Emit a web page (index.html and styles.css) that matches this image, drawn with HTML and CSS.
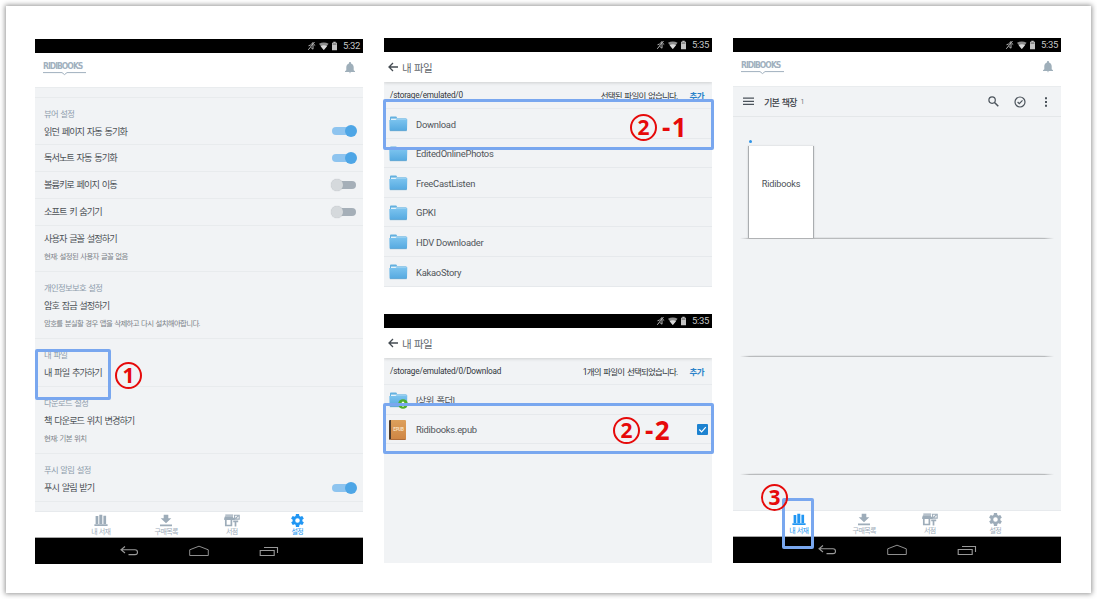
FILE: index.html
```html
<!DOCTYPE html>
<html lang="ko">
<head>
<meta charset="utf-8">
<title>RIDIBOOKS</title>
<link rel="stylesheet" href="styles.css">
</head>
<body>
<svg class="defs" width="0" height="0">
  <linearGradient id="fold" x1="0" y1="0" x2="0" y2="1"><stop offset="0" stop-color="#7cc4ef"/><stop offset="1" stop-color="#55a9e0"/></linearGradient>
  <symbol id="status" viewBox="0 0 32 10">
    <path d="M1.300 8.800 7.500 1M1.500 4.800 3.500 4 6 1.600v6.600L3.600 6.300M7 3.500l1.200 1" stroke="#b4b4b4" fill="none" stroke-width="1"/>
    <path d="M12 2.800Q16.800 .2 21.600 2.800L16.800 9z" fill="#8d8d8d"/><path d="M13.600 5.200Q16.800 3.400 20 5.200L16.800 9z" fill="#d8d8d8"/>
    <path d="M25 1.800h1.300V.8h2.400v1H30v7.500h-5z" fill="#c4c4c4"/><path d="M25.600 2.400h3.800v1.400h-3.800z" fill="#777"/>
  </symbol>
  <symbol id="bell" viewBox="0 0 10 12"><path d="M5 0C4.400 0 4 .4 4 1v.5C2.300 2 1.300 3.500 1.300 5.200v3L0 9.300v.6h10v-.6L8.700 8.200v-3C8.700 3.500 7.700 2 6 1.500V1c0-.6-.4-1-1-1zM3.900 10.400a1.150 1.150 0 0 0 2.200 0z" fill="#9fafba"/></symbol>
  <symbol id="shelf" viewBox="0 0 14 12"><path d="M1.600 1.500h2.700v8H1.600zM5.300 .2h3v9.300H5.300zM9.400 1.200h2.700v8.300H9.400zM.4 9.800h13.200v1.800H.4z" fill="currentColor"/></symbol>
  <symbol id="down" viewBox="0 0 14 12"><path d="M4.700 .2h4.600v3.600h3L7 8.800 1.700 3.800h3zM1 9.900h12v1.900H1z" fill="currentColor"/></symbol>
  <symbol id="store" viewBox="0 0 16 12"><path d="M1.300 0h7.900v1.300H1.300zM1 1.800h8v1.400h1.700v2.300H.2V3.800z" fill="currentColor"/><path d="M1.800 5v6h5.600V5M11.500 6.500V12M9.200 6.800h5" fill="none" stroke="currentColor" stroke-width="1.700"/><path d="M10.600 .7h4.600v3.900h-4.600zM11.500 4l2.800-2.600" fill="none" stroke="currentColor" stroke-width="1.100"/></symbol>
  <symbol id="gear" viewBox="2 2 20 20"><path fill="currentColor" d="M19.400 13c.04-.3.100-.600.100-1s-.06-.700-.100-1l2.100-1.600c.200-.150.250-.420.120-.640l-2-3.460c-.120-.220-.380-.300-.600-.220l-2.500 1c-.520-.400-1.080-.730-1.690-.980l-.380-2.650A.490.490 0 0 0 14 2h-4c-.250 0-.460.180-.490.420l-.380 2.650c-.610.250-1.170.590-1.690.980l-2.490-1c-.230-.090-.490 0-.610.220l-2 3.460c-.130.220-.070.490.120.640L4.600 11c-.060.300-.100.660-.100 1s.040.700.100 1l-2.100 1.600c-.190.150-.250.420-.120.640l2 3.460c.120.220.380.300.600.220l2.500-1c.520.400 1.080.730 1.690.980l.380 2.650c.030.240.240.420.490.420h4c.250 0 .460-.180.490-.420l.380-2.650c.610-.250 1.170-.590 1.690-.980l2.490 1c.230.090.490 0 .610-.220l2-3.460c.120-.220.070-.490-.120-.640zM12 15.500a3.500 3.500 0 1 1 0-7 3.500 3.500 0 0 1 0 7z"/></symbol>
  <symbol id="back" viewBox="0 0 20 12"><path d="M6 1.500 2 4.800 6 8M2 4.800h14q2.500 0 2.500 2.400T16 9.600H9.500" fill="none" stroke="#9a9a9a" stroke-width="1.100"/></symbol>
  <symbol id="home" viewBox="0 0 20 12"><path d="M.7 10.500V4.800L10 1.200l9.300 3.600v5.700z" fill="none" stroke="#8f8f8f" stroke-width="1"/></symbol>
  <symbol id="recent" viewBox="0 0 20 12"><path d="M1.200 5.500h14v5h-14zM5 2.500h13.500v5.500" fill="none" stroke="#999" stroke-width="1.100"/></symbol>
  <symbol id="arrow" viewBox="0 0 10 10"><path d="M5 1 1 5l4 4M1 5h9" fill="none" stroke="#444b52" stroke-width="1.300"/></symbol>
  <symbol id="folder" viewBox="0 0 19 16"><path d="M1 1.400Q1 .6 1.900 .6h5q.8 0 1 .8l.2.700h8.500q.9 0 .9.900V5H1z" fill="#64b1e0"/><path d="M2 2.600h15v3H2z" fill="#e6f3fa"/><path d="M.3 4h6.200l1-.8h10.800l-.3 10.800q0 .8-.8.800H1.400q-.8 0-.8-.8z" fill="url(#fold)"/><path d="M.9 14.700h16.800" stroke="#4b98c8" stroke-width=".6"/></symbol>
  <symbol id="plus" viewBox="0 0 10 10"><circle cx="5" cy="5" r="4.800" fill="#4eae2d"/><path d="M5 2.200 8 5.500H6v2H4v-2H2z" fill="#fff"/></symbol>
</svg>

<main class="card">
  <section class="phone phone-settings">
    <div class="status"><svg width="32" height="10"><use href="#status"/></svg><span>5:32</span></div>
    <header class="brand"><div class="logo">RIDIBOOKS<svg width="43" height="4" viewBox="0 0 43 4"><path d="M0 .6h19l2.500 2L24 .6h19" fill="none" stroke="#a1b0be"/></svg></div><svg class="bell" width="10" height="12"><use href="#bell"/></svg></header>
    <div class="settings">
      <div class="stub"></div>
      <div class="group first"><h2>뷰어 설정</h2><p>읽던 페이지 자동 동기화</p><i class="switch on"></i></div>
      <div class="group"><p>독서노트 자동 동기화</p><i class="switch on"></i></div>
      <div class="group"><p>볼륨키로 페이지 이동</p><i class="switch"></i></div>
      <div class="group"><p>소프트 키 숨기기</p><i class="switch"></i></div>
      <div class="group noted"><p>사용자 글꼴 설정하기</p><small>현재: 설정된 사용자 글꼴 없음</small></div>
      <div class="group first noted"><h2>개인정보보호 설정</h2><p>암호 잠금 설정하기</p><small>암호를 분실할 경우 앱을 삭제하고 다시 설치해야합니다.</small></div>
      <div class="group first"><h2>내 파일</h2><p>내 파일 추가하기</p></div>
      <div class="group first noted"><h2>다운로드 설정</h2><p>책 다운로드 위치 변경하기</p><small>현재: 기본 위치</small></div>
      <div class="group first"><h2>푸시 알림 설정</h2><p>푸시 알림 받기</p><i class="switch on"></i></div>
    </div>
    <nav class="tabs">
      <div><svg width="14" height="12"><use href="#shelf"/></svg><span>내 서재</span></div>
      <div><svg width="14" height="12"><use href="#down"/></svg><span>구매목록</span></div>
      <div><svg width="16" height="12"><use href="#store"/></svg><span>서점</span></div>
      <div class="active"><svg width="13" height="13"><use href="#gear"/></svg><span>설정</span></div>
    </nav>
    <div class="keys"><svg width="20" height="12"><use href="#back"/></svg><svg width="20" height="12"><use href="#home"/></svg><svg width="20" height="12"><use href="#recent"/></svg></div>
    <div class="frame frame-add"></div>
    <div class="step step-one"><b>1</b></div>
  </section>

  <div class="column">
    <section class="phone browser">
      <div class="status"><svg width="32" height="10"><use href="#status"/></svg><span>5:35</span></div>
      <header class="title"><svg width="10" height="10"><use href="#arrow"/></svg><span>내 파일</span></header>
      <div class="path"><span>/storage/emulated/0</span><em>선택된 파일이 없습니다.</em><a>추가</a></div>
      <div class="file"><svg width="19" height="16"><use href="#folder"/></svg><span>Download</span></div>
      <div class="file"><svg width="19" height="16"><use href="#folder"/></svg><span>EditedOnlinePhotos</span></div>
      <div class="file"><svg width="19" height="16"><use href="#folder"/></svg><span>FreeCastListen</span></div>
      <div class="file"><svg width="19" height="16"><use href="#folder"/></svg><span>GPKI</span></div>
      <div class="file"><svg width="19" height="16"><use href="#folder"/></svg><span>HDV Downloader</span></div>
      <div class="file"><svg width="19" height="16"><use href="#folder"/></svg><span>KakaoStory</span></div>
      <div class="frame frame-folder"></div>
      <div class="step step-two-a"><b>2</b><span>-1</span></div>
    </section>
    <section class="phone browser">
      <div class="status"><svg width="32" height="10"><use href="#status"/></svg><span>5:35</span></div>
      <header class="title"><svg width="10" height="10"><use href="#arrow"/></svg><span>내 파일</span></header>
      <div class="path"><span>/storage/emulated/0/Download</span><em>1개의 파일이 선택되었습니다.</em><a>추가</a></div>
      <div class="file"><div class="up"><svg width="19" height="16"><use href="#folder"/></svg><svg class="badge" width="10" height="10"><use href="#plus"/></svg></div><span class="ko">[상위 폴더]</span></div>
      <div class="file"><div class="epub">EPUB</div><span>Ridibooks.epub</span><svg class="check" width="11" height="11" viewBox="0 0 11 11"><rect width="11" height="11" rx="1" fill="#1c82d0"/><path d="M2.300 5.500 4.600 7.800 8.800 3.200" fill="none" stroke="#fff" stroke-width="1.200"/></svg></div>
      <div class="frame frame-epub"></div>
      <div class="step step-two-b"><b>2</b><span>-2</span></div>
    </section>
  </div>

  <section class="phone">
    <div class="status"><svg width="32" height="10"><use href="#status"/></svg><span>5:35</span></div>
    <header class="brand"><div class="logo">RIDIBOOKS<svg width="43" height="4" viewBox="0 0 43 4"><path d="M0 .6h19l2.500 2L24 .6h19" fill="none" stroke="#a1b0be"/></svg></div><svg class="bell" width="10" height="12"><use href="#bell"/></svg></header>
    <div class="toolbar">
      <svg width="11" height="9" viewBox="0 0 11 9"><path d="M0 1.200h11M0 4.300h11M0 7.400h11" stroke="#4b535b" stroke-width="1.300"/></svg>
      <strong>기본 책장</strong><span>1</span>
      <svg width="11" height="11" viewBox="0 0 11 11"><circle cx="4.100" cy="4.100" r="3.200" fill="none" stroke="#4b535b" stroke-width="1.200"/><path d="m6.500 6.500 3.800 3.800" stroke="#4b535b" stroke-width="1.500"/></svg>
      <svg width="12" height="12" viewBox="0 0 12 12"><circle cx="6" cy="6" r="5" fill="none" stroke="#4b535b" stroke-width="1.200"/><path d="m3.600 6 1.700 1.700 3.200-3.300" fill="none" stroke="#4b535b" stroke-width="1.200"/></svg>
      <svg width="4" height="12" viewBox="0 0 4 12"><path d="M1 1.200h2v2H1zM1 5h2v2H1zM1 8.800h2v2H1z" fill="#4b535b"/></svg>
    </div>
    <div class="shelves">
      <div class="shelf"><div class="book">Ridibooks<i></i></div></div>
      <div class="shelf"></div>
      <div class="shelf"></div>
    </div>
    <nav class="tabs">
      <div class="active"><svg width="14" height="12"><use href="#shelf"/></svg><span>내 서재</span></div>
      <div><svg width="14" height="12"><use href="#down"/></svg><span>구매목록</span></div>
      <div><svg width="16" height="12"><use href="#store"/></svg><span>서점</span></div>
      <div><svg width="13" height="13"><use href="#gear"/></svg><span>설정</span></div>
    </nav>
    <div class="keys"><svg width="20" height="12"><use href="#back"/></svg><svg width="20" height="12"><use href="#home"/></svg><svg width="20" height="12"><use href="#recent"/></svg></div>
    <div class="frame frame-library"></div>
    <div class="step step-three"><b>3</b></div>
  </section>
</main>
</body>
</html>
```

FILE: styles.css
```css
* { box-sizing: border-box; }
body {
  margin: 0;
  height: 599px;
  padding: 6px;
  overflow: hidden;
  background: #fff;
  font-family: Roboto, "Noto Sans CJK KR", sans-serif;
  color: #4d5257;
}
svg { display: block; flex: none; }
.defs { position: absolute; }
.card {
  display: flex;
  align-items: flex-start;
  gap: 21px;
  width: 1085px;
  height: 587px;
  padding: 32px 29px;
  background: #fff;
  box-shadow: 0 0 5px 1px rgba(0, 0, 0, .42);
}
.column { display: flex; flex-direction: column; gap: 27px; }
.phone {
  position: relative;
  display: flex;
  flex-direction: column;
  width: 328px;
  height: 525px;
  background: #f1f3f5;
}
.phone-settings { margin-top: 1px; }
.browser { height: 249px; }

.status {
  display: flex;
  align-items: center;
  justify-content: flex-end;
  gap: 4px;
  height: 14px;
  padding-right: 3px;
  background: #000;
  color: #c6c6c6;
  font-size: 9.500px;
  line-height: 14px;
}
.status span { letter-spacing: -.3px; }

.brand {
  display: flex;
  justify-content: space-between;
  align-items: flex-start;
  height: 35px;
  padding: 8px 8px 0;
  background: #fff;
  border-bottom: 1px solid #e9ecee;
}
.logo {
  width: 43px;
  font: 700 9px/11px "Liberation Sans Narrow", "DejaVu Sans Condensed", sans-serif;
  font-size: 8.500px;
  letter-spacing: -.98px;
  color: #a1b0be;
}
.bell { margin-top: 1px; }

.settings { flex: 1; }
.stub { height: 9.500px; border-bottom: 1px solid #e8ebed; }
.group {
  position: relative;
  display: flex;
  flex-direction: column;
  gap: 4px;
  height: 26.950px;
  padding: 6px 9px 0;
  border-bottom: 1px solid #e8ebed;
}
.group.first { height: 47.500px; padding-top: 9px; }
.group.noted { height: 46.400px; }
.group.first.noted { height: 67.200px; }
.group h2, .group p, .group small {
  margin: 0;
  font-weight: 400;
  line-height: 14px;
  white-space: nowrap;
}
.group h2 { font-size: 8.300px; letter-spacing: -.65px; word-spacing: 1px; color: #8c9bab; }
.group p { font-size: 9.200px; letter-spacing: -1px; word-spacing: 1.500px; color: #4d5257; }
.group small { font-size: 7.400px; letter-spacing: -.65px; word-spacing: 1px; color: #7c8288; }
.switch {
  position: absolute;
  right: 7px;
  bottom: 9px;
  width: 24px;
  height: 8px;
  border-radius: 4px;
  background: #a5afb8;
}
.switch::after {
  content: "";
  position: absolute;
  top: -2px;
  left: -1px;
  width: 12px;
  height: 12px;
  border-radius: 50%;
  background: #d5d9dc;
  box-shadow: 0 0 1px #a9afb4;
}
.switch.on { background: #8ec4ef; }
.switch.on::after { left: 13px; background: #4ea6e6; box-shadow: none; }

.tabs {
  display: grid;
  grid-template-columns: repeat(4, 1fr);
  height: 27px;
  padding: 0 33px;
  background: #fff;
  border-top: 1px solid #e7eaed;
  border-bottom: 1px solid #a6a6a6;
  color: #9dacb9;
}
.tabs div { display: flex; flex-direction: column; align-items: center; padding-top: 1px; }
.tabs svg { margin-top: 1px; height: 13px; }
.tabs span { font-size: 7px; line-height: 10px; letter-spacing: -.6px; word-spacing: .5px; }
.tabs .active { color: #2196f3; }
.keys {
  display: grid;
  grid-template-columns: repeat(3, 70px);
  justify-content: center;
  justify-items: center;
  align-items: center;
  height: 26px;
  background: #000;
}

.title {
  display: flex;
  align-items: center;
  gap: 4px;
  height: 30px;
  padding-left: 4px;
  background: #fff;
  box-shadow: 0 1px 3px rgba(0, 0, 0, .15);
  clip-path: inset(0 0 -4px 0);
  font-size: 10.500px;
  letter-spacing: -.6px;
  word-spacing: 1px;
  color: #62676d;
}
.path {
  display: flex;
  align-items: center;
  height: 27px;
  padding: 0 8px 0 6px;
  border-bottom: 1px solid #e7eaed;
  font-size: 8.200px;
  letter-spacing: -.18px;
  color: #30363b;
}
.path em { margin-left: auto; font-style: normal; font-size: 8.500px; letter-spacing: -.8px; word-spacing: 1.300px; }
.path a { margin-left: 12px; font-size: 8.500px; font-weight: 700; letter-spacing: -.6px; color: #2b82c9; }
.file {
  display: flex;
  align-items: center;
  gap: 8px;
  height: 29.600px;
  padding: 1.500px 4px 0 5px;
  border-bottom: 1px solid #e6e9ec;
  font-size: 9.400px;
  letter-spacing: -.25px;
  color: #50555a;
}
.file .ko { font-size: 9.300px; letter-spacing: -.6px; word-spacing: 1px; }
.up { position: relative; }
.badge { position: absolute; left: 9px; top: 7px; }
.epub {
  width: 17px;
  height: 20px;
  margin-right: 2px;
  border-left: 2.500px solid #4a3a2e;
  border-bottom: 1px solid #b06c38;
  border-radius: 1px;
  background: linear-gradient(#dda05c, #cf8644);
  color: #f7dfbf;
  font-size: 4.500px;
  font-weight: 700;
  line-height: 20px;
  text-align: center;
}
.check { margin-left: auto; }

.toolbar {
  display: flex;
  align-items: center;
  height: 30px;
  padding: 0 13px 0 10px;
  border-bottom: 1px solid #e4e7e9;
}
.toolbar strong { margin-left: 10px; font-size: 9.200px; font-weight: 500; letter-spacing: -.9px; word-spacing: 1px; color: #3c4248; }
.toolbar span { margin: 0 auto 0 4px; font-size: 7px; color: #737980; }
.toolbar svg + svg { margin-left: 15px; }
.toolbar svg:last-child { margin-left: 18px; }

.shelves { flex: 1; padding: 4px 7px 0; }
.shelf {
  display: flex;
  align-items: flex-end;
  height: 118px;
  padding: 0 0 1px 8px;
  background:
    linear-gradient(90deg, transparent, #b9bbbd 3%, #b9bbbd 97%, transparent) bottom / 100% 1px no-repeat,
    linear-gradient(90deg, transparent, #e2e4e6 5%, #e2e4e6 95%, transparent) 0 116px / 100% 1px no-repeat;
}
.book {
  position: relative;
  width: 66px;
  height: 92px;
  padding-top: 31px;
  border: solid #aaadb0;
  border-width: 0 1px;
  background: #fff;
  box-shadow: 0 0 2px rgba(0, 0, 0, .15);
  font-size: 9.200px;
  letter-spacing: -.2px;
  line-height: 14px;
  text-align: center;
}
.book i { position: absolute; left: 0; top: -6px; width: 3px; height: 3px; border-radius: 50%; background: #2e93e6; }

.frame { position: absolute; border: 3px solid #79a7ef; border-radius: 2px; }
.frame-add { left: 0; top: 310px; width: 76px; height: 51px; }
.frame-folder { left: -1px; top: 61px; width: 331px; height: 51px; }
.frame-epub { left: -1px; top: 89px; width: 331px; height: 51px; }
.frame-library { left: 49px; top: 460px; width: 32px; height: 51px; }
.step {
  position: absolute;
  display: flex;
  align-items: center;
  gap: 5px;
  font-family: "Open Sans", sans-serif;
  font-weight: 700;
  color: #e60a0a;
}
.step b {
  width: 27px;
  height: 27px;
  border: 2px solid;
  border-radius: 50%;
  font-size: 21px;
  font-weight: 700;
  line-height: 22px;
  text-align: center;
}
.step span { font-size: 26px; line-height: 25px; letter-spacing: 1.500px; margin-top: -1px; }
.step-one { left: 80px; top: 323px; }
.step-two-a { left: 246px; top: 76px; }
.step-two-b { left: 229px; top: 103px; }
.step-three { left: 28px; top: 446px; }
```
